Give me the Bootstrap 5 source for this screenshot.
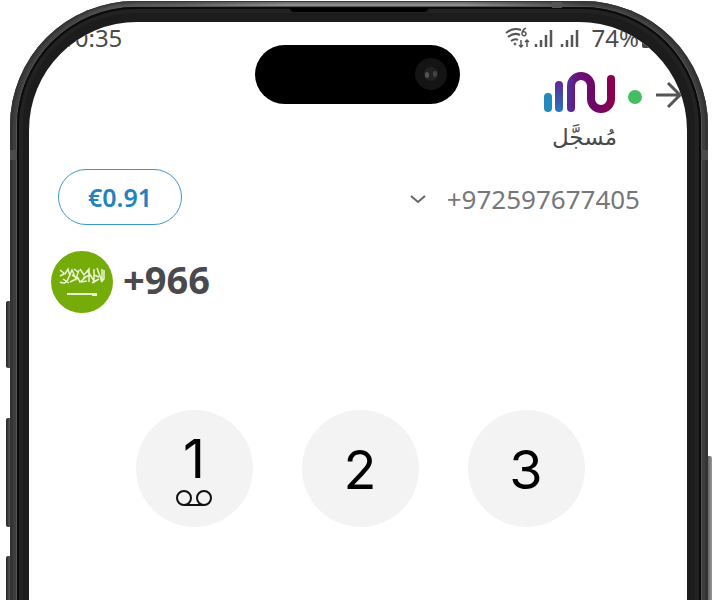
<!DOCTYPE html>
<html lang="en">
<head>
<meta charset="utf-8">
<meta name="viewport" content="width=device-width, initial-scale=1">
<title>Dialer</title>
<link href="https://cdn.jsdelivr.net/npm/bootstrap@5.3.0/dist/css/bootstrap.min.css" rel="stylesheet">
<style>
body { background: #fff; font-family: "Noto Sans", "Open Sans", sans-serif; color: #4a4a4e; overflow: hidden; }
.stage { padding: 1px 9px 0 10px; }
.phone { min-height: 100vh; padding: 5px 6px 0; border-radius: 125px 125px 0 0;
  background: linear-gradient(90deg, #3d3d3d, #444 8%, #606260 25%, #8c908c 40%, #8c908c 65%, #444 82%, #3d3d3d);
  box-shadow: inset 0 0 0 1px #333, inset 0 0 0 3px rgba(20,20,20,.2); }
.rim { padding: 1px; border-radius: 120px 120px 0 0; background: #555; }
.bezel { padding: 15px 14px 0 12px; border-radius: 119px 119px 0 0; background: #1c1c1c; box-shadow: inset 0 0 0 2px #0b0b0b, inset 0 0 0 6px #222; }
.screen { min-height: 100vh; border-radius: 108px 108px 0 0; background: #fff; overflow: hidden; }
.side-key { position: absolute; width: 4px; border-radius: 2px 0 0 2px; background: linear-gradient(90deg, #222, #5a5a5a); }
.key-a { left: 6px; top: 301px; height: 67px; }
.key-b { left: 6px; top: 418px; height: 109px; }
.key-c { left: 6px; top: 556px; height: 60px; }
.key-d { right: 5px; top: 456px; height: 160px; border-radius: 0 2px 0 0; background: linear-gradient(90deg, #666, #999); }
.antenna { position: absolute; background: #4c4c4c; }
.ant-l { left: 10px; top: 150px; width: 7px; height: 10px; }
.ant-r { right: 9px; top: 150px; width: 7px; height: 10px; }
.ant-t { right: 155px; top: 2px; width: 10px; height: 6px; background: #555; }
.speaker { position: absolute; top: 8px; left: 50%; width: 138px; height: 4px; margin-left: -69px; border-radius: 0 0 4px 4px; background: #000; }
.island { position: absolute; top: 45px; left: 50%; width: 205px; height: 59px; margin-left: -104px; border-radius: 30px; background: #000; padding-right: 12px; }
.statusbar { height: 34px; padding: 0 34px 0 32px; font-size: 24px; line-height: 32px; }
.statusbar > div { height: 32px; }
.brand { height: 113px; padding: 14px 4px 0 0; }
.reg { font-family: "DejaVu Sans", sans-serif; font-size: 23px; line-height: 42px; padding-right: 66px; }
.account { padding: 0 47px 0 29px; }
.balance { width: 124px; height: 56px; padding: 0; border: 1px solid #3b97cc; border-radius: 28px; background: #fff; color: #2384bd; font-size: 25px; line-height: 52px; font-weight: 600; }
.number { border: 0; padding: 4px 0 0; background: none; color: #77777a; font-size: 26px; line-height: 40px; }
.dialed { padding: 26px 22px 0; gap: 10px; font-size: 38px; line-height: 56px; font-weight: 700; }
.dialed output { padding-bottom: 6px; }
.keys { padding: 97px 0 0 4px; gap: 49px; }
.key { width: 117px; height: 117px; padding: 2px 0 0; border: 0; border-radius: 50%; background: #f3f3f3; color: #000; font-family: Inter, sans-serif; font-size: 54px; line-height: 54px; }
</style>
<script src="https://cdn.jsdelivr.net/npm/bootstrap@5.3.0/dist/js/bootstrap.bundle.min.js"></script>
</head>
<body>
<main class="stage position-relative">
  <span class="side-key key-a"></span><span class="side-key key-b"></span><span class="side-key key-c"></span><span class="side-key key-d"></span>
  <div class="phone"><div class="rim"><div class="bezel"><div class="screen">
    <header class="statusbar d-flex justify-content-between">
      <time>10:35</time>
      <div class="d-flex align-items-center">
        <svg width="80" height="28" viewBox="0 0 80 28" fill="none" stroke="#555" class="me-2" role="img" aria-label="Signal">
          <path d="M2 9Q9 3 17 6M4 13Q10 8 16 11M7 17Q11 14 14 16" stroke-width="2"/><circle cx="11" cy="20" r="1" fill="#555"/>
          <path d="M22 4Q18 6 18 10a2 2 0 1 0 1-2M17 16v7m-2-2 2 2 2-2M23 23v-7m-2 2 2-2 2 2" stroke-width="1.5"/>
          <path d="M32 20v3M37 16v7M42 11v12M47 6v17M58 20v3M63 16v7M68 11v12M73 6v17" stroke-width="2.5"/>
        </svg>
        <span>74%</span><svg width="14" height="24" viewBox="0 0 14 24" aria-hidden="true"><rect x="3" y="4" width="11" height="18" rx="2" fill="#444"/></svg>
      </div>
    </header>
    <section class="brand">
      <div class="d-flex justify-content-end align-items-center">
        <svg width="76" height="46" viewBox="0 0 76 46" fill="none" stroke-width="8" stroke-linecap="round" role="img" aria-label="Logo">
          <defs><linearGradient id="wave" gradientUnits="userSpaceOnUse" x1="28" y1="0" x2="72" y2="0"><stop stop-color="#52329a"/><stop offset=".2" stop-color="#69137a"/><stop offset=".65" stop-color="#700566"/><stop offset="1" stop-color="#8b004d"/></linearGradient>
          <linearGradient id="bar" x1="0" y1="0" x2="0" y2="1"><stop stop-color="#6b2494"/><stop offset=".4" stop-color="#4548a4"/><stop offset="1" stop-color="#2878b8"/></linearGradient></defs>
          <path d="M8 27v11" stroke="#238abd"/><rect x="15" y="11" width="8" height="31" rx="4" fill="url(#bar)"/>
          <path d="M31 38V16a10 10 0 0 1 20 0v13a10 10 0 0 0 20 0V9" stroke="url(#wave)"/>
        </svg>
        <svg width="67" height="46" viewBox="0 0 67 46" fill="none" stroke="#555558" stroke-width="3" aria-hidden="true"><circle cx="19" cy="27" r="7" fill="#43bf62" stroke="none"/><path d="M40 25h24M52 13l12 12-12 12"/></svg>
      </div>
      <div class="reg text-end" lang="ar"><bdi>مُسجَّل</bdi></div>
    </section>
    <section class="account d-flex justify-content-between align-items-center">
      <button class="balance" type="button">€0.91</button>
      <button class="number d-flex align-items-center" type="button"><svg width="37" height="20" viewBox="0 0 37 20" fill="none" stroke="#666" stroke-width="2" aria-hidden="true"><path d="m1 7 7 6 7-6"/></svg>+972597677405</button>
    </section>
    <section class="dialed d-flex align-items-center">
      <svg width="62" height="62" viewBox="0 0 62 62" fill="none" stroke="#eaf5d5" stroke-width="1.5" role="img" aria-label="Saudi Arabia"><circle cx="31" cy="31" r="31" fill="#75ac09" stroke="none"/><path d="M9 19l5 4 3-5 2 7M9 25l4-2M9 31q6 3 8-3l4-9 4 9 3-9M12 28l6 4M19 31l8-4 2 4 6-5M23 18l4 3M29 18l4 6 5-6v13M30 31l6-1M36 19l7 11v-12M41 32l7-4M46 17l5 14V18M50 31l3-3V19M21 24l7 4M32 27l7-3M43 24l5 2"/><path d="M16 43h30M41 44h5" stroke-width="2"/></svg>
      <output>+966</output>
    </section>
    <section class="keys d-flex justify-content-center">
      <button class="key d-flex flex-column align-items-center justify-content-center" type="button">1<svg class="mt-1" width="36" height="17" viewBox="0 0 36 17" fill="none" stroke="#111" stroke-width="2" aria-hidden="true"><circle cx="8" cy="8" r="7"/><circle cx="28" cy="8" r="7"/><path d="M8 15h20"/></svg></button>
      <button class="key" type="button">2</button>
      <button class="key" type="button">3</button>
    </section>
  </div></div></div></div>
  <span class="antenna ant-l"></span><span class="antenna ant-r"></span><span class="antenna ant-t"></span><span class="speaker"></span>
  <div class="island d-flex justify-content-end align-items-center">
    <svg width="33" height="33" viewBox="0 0 33 33" aria-hidden="true"><circle cx="16" cy="16" r="16" fill="#141414"/><circle cx="16" cy="16" r="7" fill="#222"/><ellipse cx="12" cy="17" rx="2" ry="3" fill="#555"/><ellipse cx="20" cy="16" rx="2" ry="3" fill="#444"/></svg>
  </div>
</main>
</body>
</html>
